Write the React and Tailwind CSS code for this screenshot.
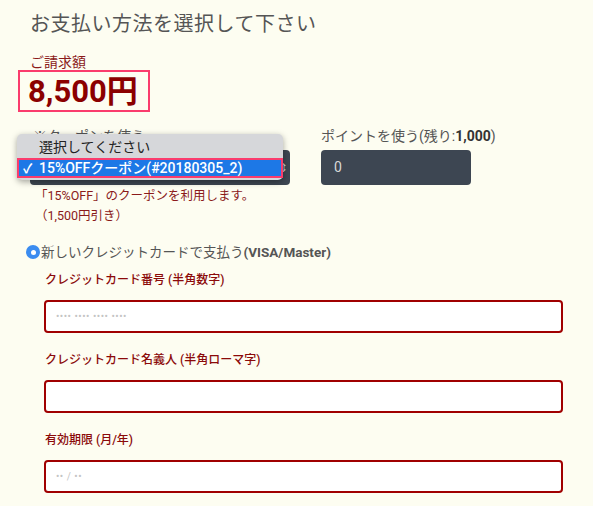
import React from "react";

const font = { fontFamily: '"Roboto", "Noto Sans CJK JP", sans-serif' };

function Field({ label, placeholder, mt }) {
  return (
    <div className={mt}>
      <div className="pl-[15px] text-[12px] leading-[20px] text-[#8b0a0a] font-medium">{label}</div>
      <div className="ml-[14px] mt-[10px] h-[33px] w-[519px] rounded-[4px] border-2 border-[#a00000] bg-white flex items-center pl-[10px] text-[10px] text-[#c4c4c4] tracking-[0.5px]">
        {placeholder}
      </div>
    </div>
  );
}

export default function App() {
  return (
    <div style={font} className="w-[593px] min-h-[506px] bg-[#fdfdf1] pl-[30px] pt-[11px] pb-[12px]">
      <h1 className="text-[20px] leading-[26px] text-[#555] tracking-[0.5px]">お支払い方法を選択して下さい</h1>
      <div className="mt-[17px] text-[14px] leading-[16px] text-[#8b1a1a]">ご請求額</div>
      <div className="-ml-[12px] inline-flex h-[42px] items-center border-2 border-[#fa3c6d] pl-[8px] pr-[10px]">
        <span className="text-[31px] font-bold text-[#8b0000] leading-none">8,500円</span>
      </div>

      <div className="mt-[13px] flex">
        <div className="relative w-[260px]">
          <div className="pl-[3px] text-[14px] leading-[22px] text-[#555]">※クーポンを使う</div>
          <div className="mt-[3px] h-[35px] w-[260px] rounded-[4px] bg-[#3d4652] flex items-center justify-end pr-[2px] text-[#d0d0d0] text-[12px]">⇕</div>
          <div className="mt-[1px] pl-[5px] text-[12.5px] leading-[20px] text-[#8b1a1a]">
            <div>「15%OFF」のクーポンを利用します。</div>
            <div>（1,500円引き）</div>
          </div>
          <div className="absolute left-[-13px] top-[9px] w-[266px] h-[46px] rounded-[5px] bg-[#d6d7da] shadow-[0_2px_6px_rgba(0,0,0,0.35)] pt-[4px]">
            <div className="pl-[22px] text-[14px] leading-[19px] text-[#222]">選択してください</div>
            <div className="mt-[1px] h-[20px] w-[266px] border-2 border-[#fa3c6d] bg-[#1d78e6] flex items-center pl-[4px] text-white text-[14px] font-medium leading-none">
              <span className="w-[16px] text-[13px] font-bold">✓</span>
              <span>15%OFFクーポン(#20180305_2)</span>
            </div>
          </div>
        </div>
        <div className="ml-[31px] w-[150px]">
          <div className="text-[14px] leading-[22px] text-[#555] whitespace-nowrap">
            ポイントを使う(残り:<span className="font-bold text-[#333]">1,000</span>)
          </div>
          <div className="mt-[3px] h-[35px] w-[150px] rounded-[4px] bg-[#3d4652] flex items-center pl-[13px] text-[14px] text-[#d8d8d8]">0</div>
        </div>
      </div>

      <div className="mt-[15px] -ml-[4px] flex h-[22px] items-center">
        <span className="flex h-[14px] w-[14px] items-center justify-center rounded-full bg-[#3b8cf0]">
          <span className="h-[5px] w-[5px] rounded-full bg-white"></span>
        </span>
        <span className="ml-[1px] text-[13.5px] leading-[22px] text-[#555]">
          新しいクレジットカードで支払う<span className="font-bold">(VISA/Master)</span>
        </span>
      </div>

      <Field mt="mt-[7px]" label="クレジットカード番号 (半角数字)" placeholder="•••• •••• •••• ••••" />
      <Field mt="mt-[17px]" label="クレジットカード名義人 (半角ローマ字)" placeholder="" />
      <Field mt="mt-[17px]" label="有効期限 (月/年)" placeholder="•• / ••" />
    </div>
  );
}
